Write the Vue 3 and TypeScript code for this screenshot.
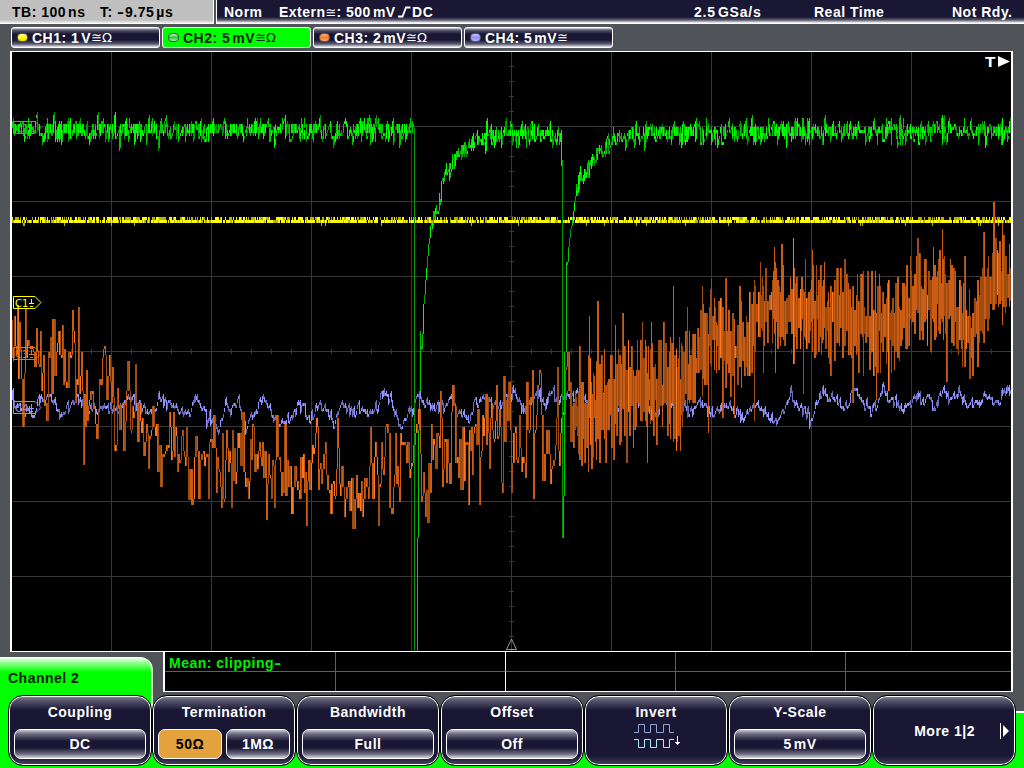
<template>
  <div class="scope">
    <header class="topbar">
      <div class="timebase">
        <span class="tb">TB: 100<i class="thin" />ns</span>
        <span>T: <span class="minus">-</span>9.75<i class="thin" />µs</span>
      </div>
      <div class="status">
        <span class="mode">Norm</span>
        <span class="trigger">
          Extern<b class="sym">≅</b>: 500<i class="thin" />mV
          <svg class="edge" width="13" height="12" viewBox="0 0 13 12">
            <path d="M0 10.5H4.5L8 1.5H12.5" />
          </svg>DC
        </span>
        <span class="rate">2.5<i class="thin" />GSa/s</span>
        <span class="acq">Real Time</span>
        <span>Not Rdy.</span>
      </div>
    </header>

    <nav class="channels">
      <div v-for="ch in channels" :key="ch.name" class="channel" :class="{ active: ch.active }">
        <span class="led" :class="ch.led" />
        <span>{{ ch.name }}: {{ ch.value }}<i class="thin" />{{ ch.unit }}</span>
        <span class="sym">{{ ch.coupling }}</span>
      </div>
    </nav>

    <svg class="plot" width="1003" height="601" viewBox="10 51 1003 601">
      <rect x="10" y="51" width="1003" height="601" fill="#fff" />
      <rect x="12" y="52" width="999" height="599" fill="#000" />
      <path class="grid" :d="gridPath" />
      <g class="bars">
        <path v-for="(bar, i) in layers" :key="i" :d="bar.d" :stroke="bar.color" />
      </g>
      <g v-for="m in markers" :key="m.label" class="marker" :stroke="m.color">
        <path :d="`M13.5 ${m.y - 5.5}H35L41 ${m.y + 0.5}L35 ${m.y + 6.5}H13.5Z`" />
        <text x="15" :y="m.y + 4.5" :fill="m.color" stroke="none">{{ m.label }}</text>
        <path :d="`M31.5 ${m.y - 3}V${m.y + 2}M29 ${m.y + 1.5}H34M30 ${m.y + 4.5}H33`" />
      </g>
      <path class="reference" d="M506.5 649.5L511.5 639L516.5 649.5Z" />
      <text class="trigger-mark" x="985" y="67" textLength="11" lengthAdjust="spacingAndGlyphs">T</text>
      <path d="M998 56V67L1010 61.5Z" fill="#fff" />
    </svg>

    <section class="lower">
      <div class="info">
        <div class="tab">Channel 2</div>
        <div class="measure">
          <div class="cell result">Mean: clipping<span class="dash">-</span></div>
          <div v-for="n in 9" :key="n" class="cell" />
        </div>
      </div>

      <div class="menu">
        <div v-for="item in menu" :key="item.title" class="softkey" :class="{ more: item.more }">
          <div class="title">{{ item.title }}</div>
          <div v-if="item.options" class="options">
            <div
              v-for="opt in item.options"
              :key="opt.text"
              class="option"
              :class="{ selected: opt.selected }"
            >
              {{ opt.text }}<template v-if="opt.unit"><i class="thin" />{{ opt.unit }}</template>
            </div>
          </div>
          <svg v-if="item.invert" class="invert" width="50" height="26" viewBox="0 0 50 26">
            <path stroke="#8fa4d8" d="M1 9.5H5.5V1.5H11.5V9.5H17.5V1.5H23.5V9.5H30.5V1.5H36.5V9.5H41" />
            <path stroke="#a8e8f8" d="M1 16.5H5.5V24.5H11.5V16.5H17.5V24.5H23.5V16.5H30.5V24.5H36.5V16.5H41" />
            <path stroke="#fff" d="M44.5 13V22M42 19.5H47M43 20.5H46" />
          </svg>
          <svg v-if="item.more" class="arrow" width="10" height="16" viewBox="0 0 10 16">
            <path d="M0.5 0V16" stroke="#fff" />
            <path d="M3 2V14L9 8Z" fill="#fff" />
          </svg>
        </div>
      </div>
    </section>
  </div>
</template>

<script setup lang="ts">
interface Channel {
  name: string
  value: string
  unit: string
  coupling: string
  led: string
  active?: boolean
}

interface Option {
  text: string
  unit?: string
  selected?: boolean
}

interface MenuItem {
  title: string
  options?: Option[]
  invert?: boolean
  more?: boolean
}

type Point = [number, number]

const channels: Channel[] = [
  { name: 'CH1', value: '1', unit: 'V', coupling: '≅Ω', led: 'yellow' },
  { name: 'CH2', value: '5', unit: 'mV', coupling: '≅Ω', led: 'green', active: true },
  { name: 'CH3', value: '2', unit: 'mV', coupling: '≅Ω', led: 'orange' },
  { name: 'CH4', value: '5', unit: 'mV', coupling: '≅', led: 'blue' },
]

const menu: MenuItem[] = [
  { title: 'Coupling', options: [{ text: 'DC' }] },
  { title: 'Termination', options: [{ text: '50Ω', selected: true }, { text: '1MΩ' }] },
  { title: 'Bandwidth', options: [{ text: 'Full' }] },
  { title: 'Offset', options: [{ text: 'Off' }] },
  { title: 'Invert', invert: true },
  { title: 'Y-Scale', options: [{ text: '5', unit: 'mV' }] },
  { title: 'More 1|2', more: true },
]

const markers = [
  { label: 'C2', y: 127, color: '#00e000' },
  { label: 'C1', y: 302, color: '#ffff00' },
  { label: 'C3', y: 353, color: '#f07020' },
  { label: 'C4', y: 407, color: '#9090f8' },
]

const LEFT = 12
const RIGHT = 1011

// graticule: 10 x 8 divisions with fine ticks on both centre axes
let gridPath = ''
for (let x = 111; x < 1000; x += 100) gridPath += `M${x + 0.5} 52V651`
for (let y = 126; y < 650; y += 75) gridPath += `M12 ${y + 0.5}H1011`
for (let x = 31; x < 1011; x += 20) gridPath += `M${x + 0.5} 349V354`
for (let y = 66; y < 650; y += 15) gridPath += `M509 ${y + 0.5}H514`

let seed = 20117
const rnd = () => {
  seed = (seed + 0x6d2b79f5) | 0
  let t = Math.imul(seed ^ (seed >>> 15), 1 | seed)
  t = (t + Math.imul(t ^ (t >>> 7), 61 | t)) ^ t
  return ((t ^ (t >>> 14)) >>> 0) / 4294967296
}
const gauss = () => (rnd() + rnd() + rnd() + rnd() - 2) * 1.1
const snap = (y: number) => Math.round(y / 3) * 3 + 1

const lerp = (pts: Point[], x: number) => {
  if (x <= pts[0][0]) return pts[0][1]
  for (let i = 1; i < pts.length; i++) {
    if (x <= pts[i][0]) {
      const [x0, y0] = pts[i - 1]
      const [x1, y1] = pts[i]
      return y0 + ((y1 - y0) * (x - x0)) / (x1 - x0)
    }
  }
  return pts[pts.length - 1][1]
}

const makeLayer = (colors: string[]) => {
  const paths = colors.map((color) => ({ color, d: '' }))
  const add = (x: number, a: number, b: number, shade: number) => {
    const top = Math.min(a, b)
    const bottom = Math.max(a, b, top + 3)
    paths[shade].d += `M${x + 0.5} ${top}V${bottom}`
  }
  return { paths, add }
}

// CH1: flat line, toggling between two quantisation levels
const ch1 = makeLayer(['#ffff00', '#b4b400'])
let run = 0
let runShade = 0
for (let x = LEFT; x < RIGHT; x++) {
  if (run-- <= 0) {
    run = Math.floor(rnd() * 4)
    runShade = rnd() < 0.55 ? 1 : 0
  }
  const r = rnd()
  if (r > 0.07) ch1.add(x, 220, 223, r < 0.26 ? 1 : 0)
  if (rnd() < 0.6) ch1.add(x, 217, 220, runShade)
  if (rnd() < 0.025) ch1.add(x, 223, 226, 1)
}

// CH4: slow wander with a little noise
const ch4Mean: Point[] = [
  [12, 398], [18, 408], [24, 410], [30, 405], [34, 415], [37, 398], [50, 395], [55, 402], [61, 415],
  [68, 403], [78, 396], [85, 405], [98, 408], [110, 403], [120, 406], [130, 393], [138, 403],
  [144, 410], [150, 411], [158, 398], [167, 398], [175, 403], [184, 415], [190, 407], [194, 395],
  [200, 402], [206, 416], [213, 420], [218, 430], [225, 400], [230, 411], [237, 398], [245, 427],
  [251, 410], [262, 396], [268, 405], [275, 420], [289, 420], [297, 403], [303, 408], [309, 416],
  [316, 403], [325, 404], [333, 421], [341, 403], [350, 408], [358, 403], [367, 411], [376, 405],
  [380, 394], [384, 391], [390, 397], [400, 428], [406, 412], [412, 406], [418, 393], [424, 402],
  [433, 408], [440, 403], [446, 406], [449, 390], [455, 408], [468, 416], [475, 400], [484, 393],
  [492, 405], [500, 402], [506, 394], [514, 393], [524, 411], [530, 398], [538, 392], [543, 403],
  [552, 390], [556, 399], [570, 391], [580, 391], [588, 401], [596, 413], [607, 390], [615, 407],
  [622, 402], [635, 390], [643, 404], [653, 417], [661, 400], [672, 401], [684, 403], [689, 412],
  [697, 400], [704, 404], [713, 413], [720, 405], [732, 405], [742, 418], [752, 404], [765, 410],
  [772, 416], [777, 423], [784, 407], [790, 391], [796, 404], [804, 408], [810, 418], [817, 396],
  [822, 391], [833, 397], [843, 408], [849, 398], [855, 386], [862, 402], [870, 408], [875, 406],
  [882, 386], [889, 400], [896, 400], [902, 410], [910, 400], [917, 394], [921, 400], [927, 391],
  [933, 405], [941, 390], [953, 398], [958, 390], [966, 404], [974, 397], [990, 398], [1000, 398],
  [1006, 386], [1011, 384],
]
const ch4 = makeLayer(['#6c6cbc', '#9494ff'])
let prev4 = 400
for (let x = LEFT; x < RIGHT; x++) {
  const y = snap(lerp(ch4Mean, x) + gauss() * 5.5)
  ch4.add(x, prev4, y + 2, rnd() < 0.5 ? 0 : 1)
  prev4 = y
}

// CH3: noisy trace inside a drifting envelope [x, top, bottom]
const ch3Envelope: [number, number, number][] = [
  [12, 305, 375], [20, 315, 385], [28, 318, 380], [40, 340, 405], [50, 335, 390], [60, 330, 385],
  [72, 325, 395], [80, 345, 420], [90, 375, 425], [104, 358, 415], [112, 372, 430], [125, 385, 435],
  [135, 390, 440], [150, 415, 460], [165, 425, 465], [178, 420, 465], [188, 445, 495],
  [200, 445, 495], [211, 415, 475], [222, 450, 495], [240, 430, 485], [260, 438, 487],
  [275, 435, 492], [285, 440, 490], [303, 460, 508], [315, 430, 475], [328, 460, 500],
  [350, 470, 508], [368, 460, 500], [384, 435, 478], [400, 438, 485], [418, 425, 480],
  [426, 465, 515], [438, 420, 475], [448, 405, 455], [466, 430, 490], [480, 400, 465],
  [494, 395, 455], [501, 420, 475], [508, 395, 450], [521, 430, 478], [530, 390, 445],
  [538, 385, 430], [546, 410, 460], [552, 440, 478], [566, 375, 430], [576, 385, 455],
  [590, 355, 460], [605, 360, 455], [620, 345, 440], [640, 350, 440], [655, 345, 435],
  [675, 350, 440], [685, 340, 415], [700, 315, 400], [712, 295, 368], [730, 315, 385],
  [745, 310, 385], [756, 285, 345], [772, 268, 335], [790, 270, 352], [815, 270, 350],
  [835, 275, 355], [855, 282, 365], [875, 280, 365], [895, 290, 360], [912, 262, 328],
  [925, 265, 350], [940, 252, 325], [958, 280, 355], [972, 300, 370], [985, 265, 335],
  [997, 235, 310], [1011, 255, 325],
]
const ch3Spikes: Point[] = [
  [17, 305], [25, 308], [46, 421], [52, 319], [72, 310], [78, 307], [83, 465], [105, 355],
  [109, 355], [114, 451], [123, 451], [127, 361], [143, 456], [160, 487], [188, 500], [193, 499],
  [208, 499], [213, 415], [223, 499], [252, 424], [274, 508], [276, 415], [284, 424], [306, 526],
  [317, 427], [330, 514], [337, 418], [344, 517], [352, 529], [362, 517], [370, 427], [378, 526],
  [386, 424], [389, 508], [400, 433], [416, 424], [425, 517], [427, 523], [431, 424], [440, 391],
  [442, 487], [446, 483], [452, 385], [468, 505], [479, 505], [485, 394], [496, 385], [501, 483],
  [503, 376], [511, 493], [526, 382], [533, 499], [540, 373], [542, 481], [550, 484], [557, 367],
  [559, 466], [566, 367], [579, 346], [581, 466], [589, 316], [591, 469], [597, 301], [605, 463],
  [615, 325], [622, 313], [626, 463], [642, 322], [647, 463], [651, 322], [663, 322], [673, 286],
  [676, 451], [680, 451], [687, 307], [702, 286], [708, 433], [711, 279], [722, 418], [725, 278],
  [734, 418], [739, 286], [754, 421], [760, 262], [763, 373], [774, 247], [775, 373], [781, 244],
  [793, 238], [803, 394], [812, 250], [830, 376], [844, 259], [852, 403], [876, 400], [888, 391],
  [906, 265], [917, 238], [933, 247], [942, 229], [946, 382], [964, 256], [972, 376], [983, 232],
  [993, 202], [1002, 223],
]
const tops = ch3Envelope.map(([x, t]): Point => [x, t])
const bottoms = ch3Envelope.map(([x, , b]): Point => [x, b])
const spikes = new Map(ch3Spikes)
const ch3 = makeLayer(['#a04c10', '#cc5c14', '#ff7820'])
let prev3 = 320
let a = 320
let b = 340
let hold = 0
for (let x = LEFT; x < RIGHT; x++) {
  const top = lerp(tops, x)
  const bottom = lerp(bottoms, x)
  const mid = (top + bottom) / 2
  const half = (bottom - top) / 2
  const spike = spikes.get(x)
  if (hold > 0 && spike === undefined) {
    // slow edge: the same span covers a second column
    hold--
    ch3.add(x, a, b, rnd() < 0.5 ? 0 : 1)
    continue
  }
  if (x < 570) {
    a = prev3
    b = spike ?? snap(mid + (prev3 - mid) * 0.2 + gauss() * 1.25 * half)
    hold = rnd() < 0.25 ? 1 : 0
  } else {
    a = snap(mid - half * (rnd() * 1.15 + 0.15))
    b = snap(mid + half * (rnd() * 1.15 + 0.15))
    if (spike !== undefined) {
      if (spike < mid) a = spike
      else b = spike
    }
    hold = rnd() < 0.5 ? 1 : 0
  }
  const len = Math.abs(b - a)
  const r = rnd()
  const shade = len < 20 ? (r < 0.4 ? 2 : 1) : r < 0.07 ? 2 : r < 0.55 ? 1 : 0
  ch3.add(x, a, b, shade)
  prev3 = b
}

// CH2: two negative pulses with exponential recovery
const ch2Mean: Point[] = [
  [12, 128], [413, 128], [421, 345], [422, 330], [423, 305], [424, 292], [426, 268], [428, 244],
  [430, 230], [433, 215], [437, 205], [441, 187], [446, 167], [452, 164], [457, 153], [464, 146],
  [470, 141], [478, 139], [486, 134], [500, 132], [555, 132], [560, 138], [567, 262], [569, 235],
  [571, 225], [573, 208], [575, 194], [577, 182], [580, 170], [583, 175], [588, 164], [593, 156],
  [600, 147], [612, 139], [625, 135], [640, 131], [700, 130], [1011, 129],
]
const ch2 = makeLayer(['#009800', '#00c800', '#00ff00'])
let prev2 = 128
for (let x = LEFT; x < RIGHT; x++) {
  if ((x > 413 && x < 421) || (x > 561 && x < 567)) {
    prev2 = snap(lerp(ch2Mean, x + 1))
    continue
  }
  const mean = lerp(ch2Mean, x)
  const steep = (x > 420 && x < 430) || (x > 566 && x < 576)
  const y = snap(mean + gauss() * (steep ? 3 : 10))
  const r = rnd()
  const shade = r < 0.35 ? 2 : r < 0.75 ? 1 : 0
  ch2.add(x, prev2, steep ? y : y + 3, shade)
  if (!steep) {
    // keep the core of the band filled
    if (rnd() < 0.4) ch2.add(x, snap(mean - 4), snap(mean + 4), rnd() < 0.5 ? 1 : 2)
    if (rnd() < 0.05) ch2.add(x, mean, snap(mean + (rnd() < 0.5 ? 14 : -12)), 1)
  }
  prev2 = y
}
ch2.add(414, 127, 651, 0)
ch2.add(417, 538, 651, 1)
ch2.add(418, 430, 538, 1)
ch2.add(419, 391, 430, 1)
ch2.add(420, 331, 391, 1)
ch2.add(562, 160, 538, 0)
ch2.add(563, 496, 538, 1)
ch2.add(564, 352, 496, 1)
ch2.add(566, 262, 352, 1)

const layers = [...ch1.paths, ...ch4.paths, ...ch3.paths, ...ch2.paths]
</script>

<style>
body {
  margin: 0;
  background: #505458;
}
</style>

<style scoped>
.scope {
  width: 1024px;
  height: 768px;
  overflow: hidden;
  display: flex;
  flex-direction: column;
  background: #505458;
  color: #fff;
  font: bold 14px/16px 'Liberation Sans', Arial, sans-serif;
  letter-spacing: 0.5px;
  white-space: nowrap;
}

.thin {
  display: inline-block;
  width: 2px;
}

.sym {
  font-family: 'DejaVu Sans', sans-serif;
  font-weight: normal;
  font-size: 13px;
  letter-spacing: 0;
}

.minus {
  display: inline-block;
  width: 8px;
  transform: scaleX(1.5);
  transform-origin: left;
}

.topbar {
  display: flex;
  gap: 2px;
  height: 24px;
}

.timebase {
  box-sizing: border-box;
  display: flex;
  width: 214px;
  padding: 4px 0 0 12px;
  border-right: 1px solid #fff;
  border-bottom: 1px solid #fff;
  background: linear-gradient(#c0c0c0 20px, #eee 23px);
  color: #000;
}

.tb {
  width: 88px;
}

.status {
  box-sizing: border-box;
  flex: 1;
  display: flex;
  padding: 4px 0 0 7px;
  border-left: 1px solid #fff;
  border-bottom: 1px solid #fff;
  background: linear-gradient(#1a1734 17px, #5c5a70 20px, #fff 23px);
}

.mode {
  width: 55px;
}

.trigger {
  width: 415px;
}

.edge {
  margin: 0 1px -1px -2px;
  fill: none;
  stroke: #fff;
  stroke-width: 1.8;
}

.rate {
  width: 120px;
  letter-spacing: 0.8px;
}

.acq {
  width: 138px;
}

.channels {
  display: flex;
  gap: 2px;
  height: 21px;
  padding: 3px 11px;
}

.channel {
  box-sizing: border-box;
  display: flex;
  align-items: center;
  width: 149px;
  height: 21px;
  padding-left: 5px;
  border: 1px solid #fff;
  border-radius: 3px;
  background: linear-gradient(#d8d8e0, #5c5a70 2px, #1a1734 6px, #1a1734 12px, #5c5a70 16px, #e8e8f0);
}

.channel.active {
  background: #00ff00;
  color: #06250a;
}

.led {
  box-sizing: border-box;
  width: 11px;
  height: 9px;
  margin-right: 4px;
  border: 1px solid #555;
  border-radius: 4px;
}

.led.yellow {
  background: linear-gradient(#ffffa0, #ffff00 50%, #e0e000);
}

.led.green {
  border-color: #24602c;
  background: linear-gradient(#c8e8c8, #30c840 50%, #b0f0b0);
}

.led.orange {
  background: linear-gradient(#ffb080, #ff7820 50%, #ffa070);
}

.led.blue {
  background: linear-gradient(#c8c8ff, #8c8cff 50%, #b8b8ff);
}

.plot {
  flex: none;
  display: block;
  margin-left: 10px;
}

.grid {
  stroke: #383838;
  shape-rendering: crispEdges;
}

.bars {
  shape-rendering: crispEdges;
}

.marker path {
  fill: none;
}

.marker text {
  font: normal 10px 'DejaVu Sans', sans-serif;
  letter-spacing: 0;
}

.reference {
  fill: none;
  stroke: #999;
}

.trigger-mark {
  font-size: 15px;
  fill: #fff;
}

.lower {
  flex: 1;
  background: linear-gradient(#505458 59px, #fff 59px, #fff 61px, #00ff00 61px);
}

.info {
  display: flex;
  align-items: flex-start;
  gap: 10px;
  height: 43px;
}

.tab {
  box-sizing: border-box;
  width: 153px;
  height: 68px;
  margin-top: 5px;
  padding: 13px 0 0 8px;
  border-right: 2px solid #d8ffd8;
  border-radius: 0 13px 0 0;
  background: linear-gradient(#fff, #a0ffa0 5px, #00ff00 15px);
  color: #001c00;
}

.measure {
  box-sizing: border-box;
  display: grid;
  grid-template-columns: 171px 170px 170px 170px 1fr;
  grid-template-rows: 20px 19px;
  width: 850px;
  height: 40px;
  border: 2px solid #fff;
  border-width: 0 2px 1px;
  background: #000;
}

.cell {
  border-right: 1px solid #606060;
  border-bottom: 1px solid #606060;
}

.cell:nth-child(5n) {
  border-right: 0;
}

.cell:nth-child(5n + 2) {
  border-right-color: #fff;
}

.cell:nth-child(n + 6) {
  border-bottom: 0;
}

.result {
  padding: 3px 0 0 4px;
  height: 16px;
  color: #00f000;
}

.dash {
  display: inline-block;
  transform: scaleX(1.5);
  transform-origin: left;
}

.menu {
  position: relative;
  display: flex;
  padding-left: 8px;
}

.softkey {
  box-sizing: border-box;
  display: flex;
  flex-direction: column;
  align-items: center;
  width: 144px;
  height: 71px;
  padding: 8px 5px 0;
  border: 1px solid #000;
  border-radius: 15px;
  box-shadow: inset 0 0 0 1px #fff;
  background: linear-gradient(#8c8a9c, #5c5a70 4px, #1a1734 14px, #1a1734 60px, #45435a);
}

.options {
  align-self: stretch;
  display: flex;
  gap: 4px;
  margin-top: 9px;
}

.option {
  box-sizing: border-box;
  flex: 1;
  height: 30px;
  padding-top: 6px;
  border: 1px solid #fff;
  border-radius: 7px;
  text-align: center;
  background: linear-gradient(#c8c8d0, #6c6a80 4px, #1a1734 11px, #1a1734 18px, #6c6a80 24px, #d8d8e0);
}

.option.selected {
  background: #e4a23c;
  color: #000;
}

.invert {
  margin: 3px 0 0 4px;
  fill: none;
}

.more {
  flex-direction: row;
  justify-content: flex-end;
  padding-top: 0;
}

.more .title {
  margin-right: 25px;
}
</style>
